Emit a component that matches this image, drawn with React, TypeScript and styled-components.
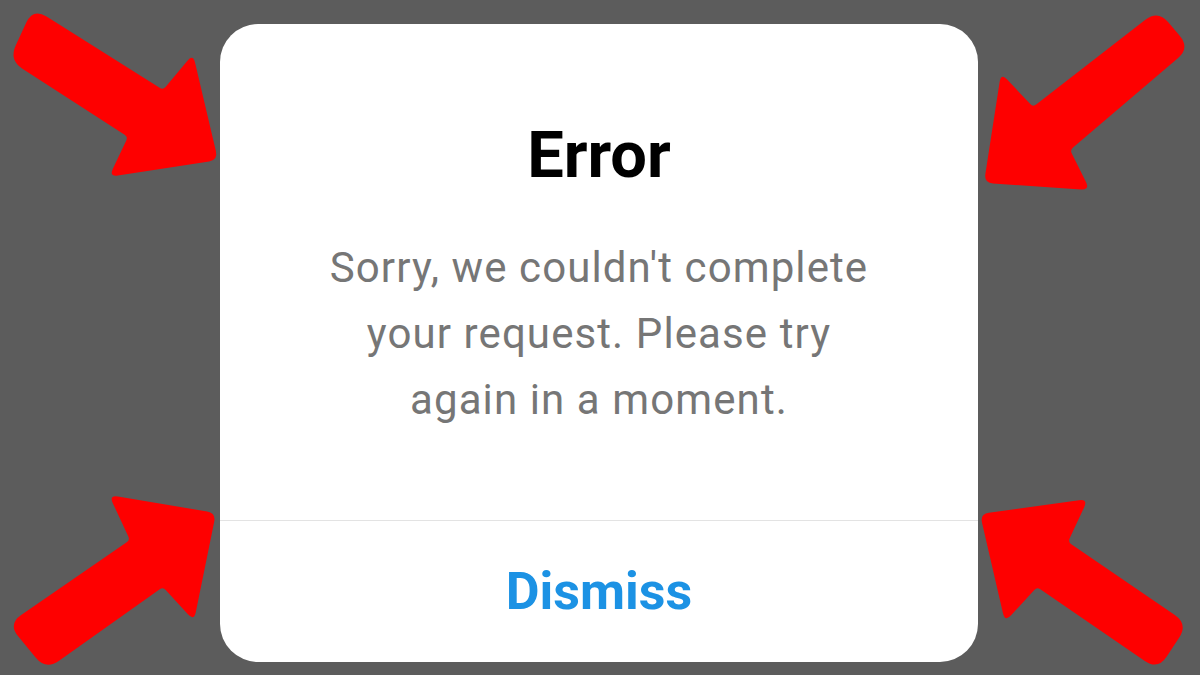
import React from "react";
import styled, { createGlobalStyle } from "styled-components";

const GlobalStyle = createGlobalStyle`
  html, body {
    margin: 0;
    padding: 0;
    background: #5c5c5c;
  }
  * { box-sizing: border-box; }
`;

const Page = styled.div`
  position: relative;
  width: 1200px;
  height: 675px;
  overflow: hidden;
  background: #5c5c5c;
  display: flex;
  justify-content: center;
  align-items: flex-start;
  padding-top: 24px;
  font-family: Roboto, "Noto Sans", "Liberation Sans", sans-serif;
`;

const Dialog = styled.div`
  width: 758px;
  height: 638px;
  margin-left: -2px;
  background: #ffffff;
  border-radius: 38px;
  display: flex;
  flex-direction: column;
  overflow: hidden;
`;

const Body = styled.div`
  flex: 1;
  display: flex;
  flex-direction: column;
  align-items: center;
  padding-top: 99px;
`;

const Title = styled.h1`
  margin: 0;
  font-family: Roboto, "Liberation Sans", sans-serif;
  font-weight: 700;
  font-size: 65px;
  line-height: 65px;
  color: #000000;
`;

const Message = styled.p`
  margin: 47px 0 0;
  text-align: center;
  white-space: nowrap;
  font-family: Roboto, "Liberation Sans", sans-serif;
  font-weight: 400;
  font-size: 42px;
  letter-spacing: 1.1px;
  line-height: 66px;
  color: #767676;
`;

const Footer = styled.div`
  height: 142px;
  border-top: 1px solid #e3e3e3;
  display: flex;
  align-items: center;
  justify-content: center;
`;

const DismissButton = styled.button`
  border: none;
  background: transparent;
  padding: 0;
  font-family: Roboto, "Liberation Sans", sans-serif;
  font-weight: 700;
  font-size: 52px;
  line-height: 141px;
  color: #1c92e4;
  cursor: pointer;
`;

const ArrowLayer = styled.svg`
  position: absolute;
  left: 0;
  top: 0;
  width: 1200px;
  height: 675px;
  pointer-events: none;
`;

type V = [number, number, number];

function roundedPath(pts: V[]): string {
  const n = pts.length;
  let d = "";
  for (let i = 0; i < n; i++) {
    const [x, y, r] = pts[i];
    const [px, py] = pts[(i - 1 + n) % n];
    const [nx, ny] = pts[(i + 1) % n];
    const l1 = Math.hypot(x - px, y - py);
    const l2 = Math.hypot(nx - x, ny - y);
    const r1 = Math.min(r, l1 / 2);
    const r2 = Math.min(r, l2 / 2);
    const ax = x + ((px - x) / l1) * r1;
    const ay = y + ((py - y) / l1) * r1;
    const bx = x + ((nx - x) / l2) * r2;
    const by = y + ((ny - y) / l2) * r2;
    d += (i === 0 ? `M${ax},${ay}` : `L${ax},${ay}`) + ` Q${x},${y} ${bx},${by} `;
  }
  return d + "Z";
}

const arrows: V[][] = [
  [
    [33, 8, 16],
    [163, 90, 4],
    [193, 54, 9],
    [218, 160, 9],
    [109, 177, 9],
    [128, 137, 4],
    [9, 60, 16],
  ],
  [
    [130, 540, 4],
    [109, 495, 9],
    [216, 513, 9],
    [194, 621, 9],
    [163, 587, 4],
    [46, 670, 16],
    [8, 624, 16],
  ],
  [
    [1158, 10, 16],
    [1190, 48, 16],
    [1070, 150, 4],
    [1090, 190, 9],
    [984, 183, 9],
    [1001, 73, 9],
    [1033, 107, 4],
  ],
  [
    [1088, 499, 9],
    [1068, 542, 4],
    [1188, 624, 16],
    [1158, 670, 16],
    [1037, 587, 4],
    [1005, 622, 9],
    [980, 514, 9],
  ],
];

export default function App() {
  return (
    <>
      <GlobalStyle />
      <Page>
        <Dialog>
          <Body>
            <Title>Error</Title>
            <Message>
              Sorry, we couldn't complete
              <br />
              your request. Please try
              <br />
              again in a moment.
            </Message>
          </Body>
          <Footer>
            <DismissButton>Dismiss</DismissButton>
          </Footer>
        </Dialog>
        <ArrowLayer viewBox="0 0 1200 675">
          {arrows.map((a, i) => (
            <path key={i} d={roundedPath(a)} fill="#fe0000" />
          ))}
        </ArrowLayer>
      </Page>
    </>
  );
}
